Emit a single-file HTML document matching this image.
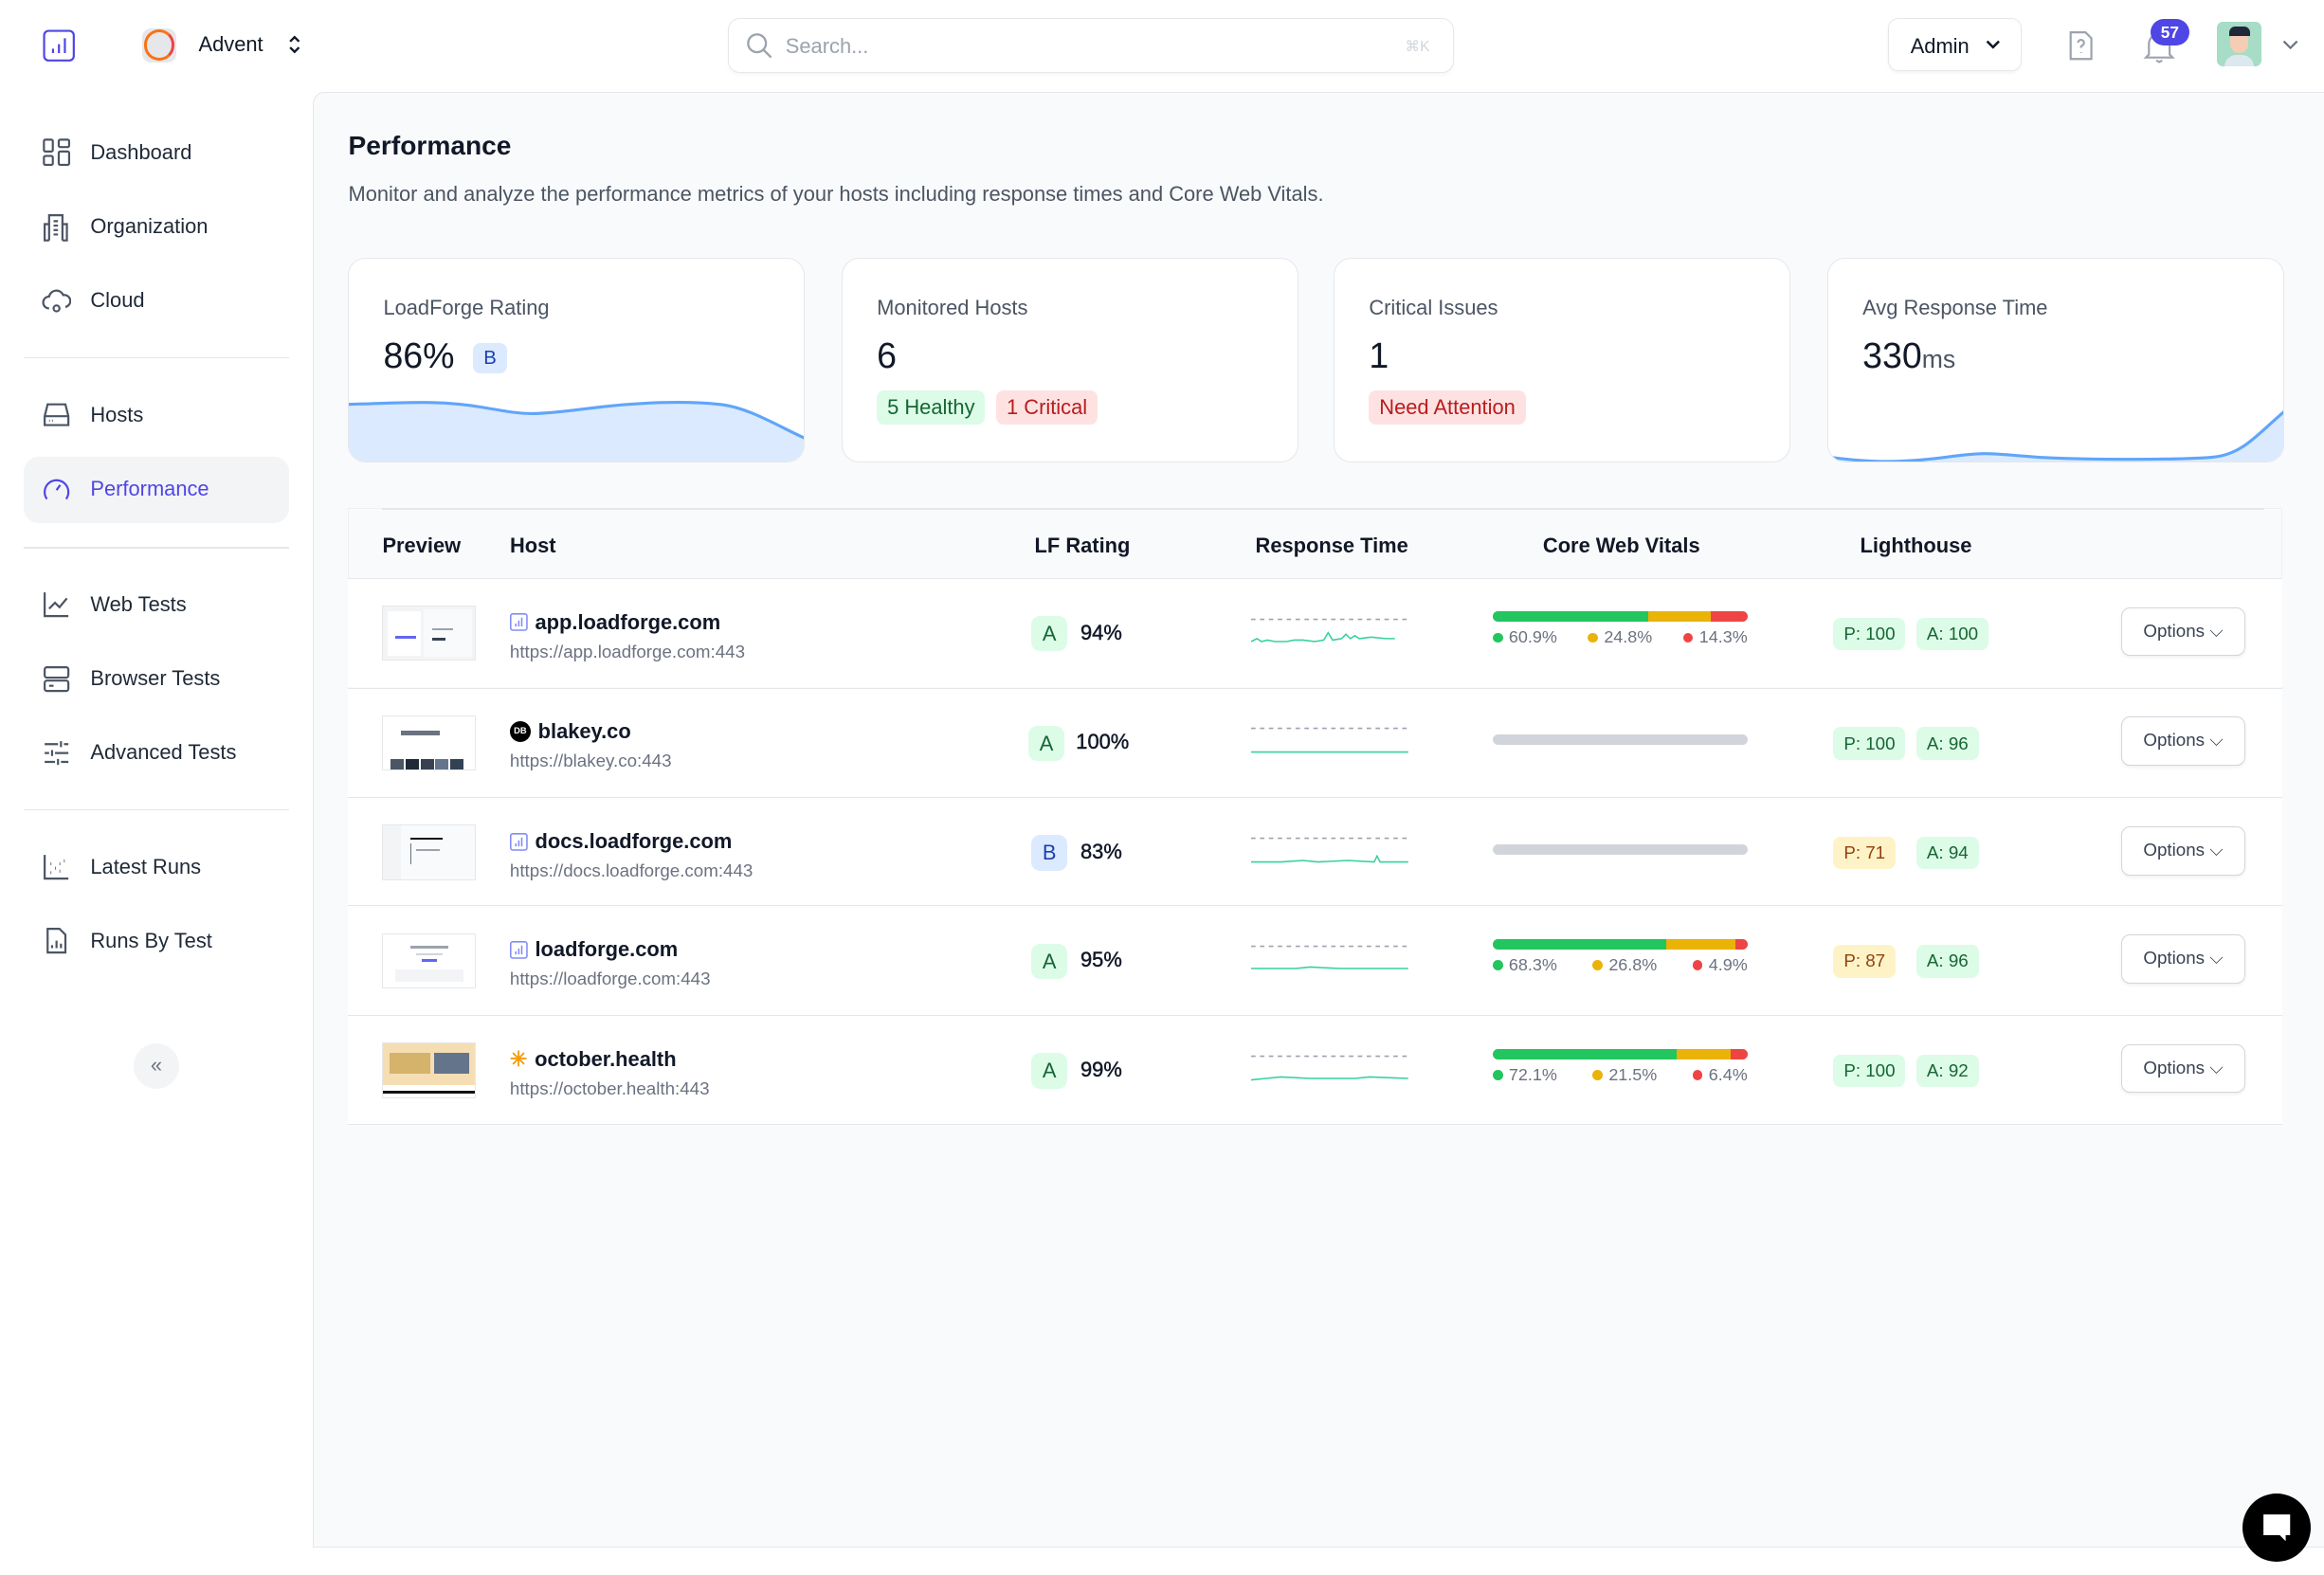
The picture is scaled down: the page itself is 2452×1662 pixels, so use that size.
<!DOCTYPE html>
<html><head><meta charset="utf-8">
<style>
html,body{margin:0;padding:0;background:#fff;overflow:hidden}
body{width:2452px;height:1662px}
#r{position:relative;width:1568px;height:1063px;zoom:1.56378;font-family:"Liberation Sans",sans-serif;color:#111827}
.a{position:absolute}
.nav{position:absolute;left:28px;font-size:14px;color:#1f2937;display:flex;align-items:center;gap:13px}
.nav svg{width:20px;height:20px;fill:none;stroke:#4b5563;stroke-width:1.4}
.sep{position:absolute;left:16px;width:179px;height:1px;background:#e5e7eb}
.card{position:absolute;top:174px;width:308px;height:138px;background:#fff;border:1px solid #e5e7eb;border-radius:12px;overflow:hidden;box-sizing:border-box}
.card .t{position:absolute;left:23px;top:25px;font-size:14px;color:#4b5563}
.card .v{position:absolute;left:23px;top:52px;font-size:24px;color:#111827}
.pill{display:inline-block;border-radius:5px;padding:3px 7px;font-size:14px}
.row{position:absolute;left:235px;width:1305px;height:73px;background:#fff;border-top:1px solid #e5e7eb}
.th{position:absolute;top:360px;font-size:14px;font-weight:bold;color:#111827}
.thumb{position:absolute;left:23px;top:18px;width:62px;height:36px;background:#fff;border:1px solid #e5e7eb;overflow:hidden}
.thumb b{position:absolute;display:block}
.host{position:absolute;left:109px;top:21px;font-size:14px;font-weight:bold;display:flex;align-items:center;gap:5px}
.url{position:absolute;left:109px;top:42px;font-size:12px;color:#6b7280}
.gr{position:absolute;top:25px;width:24px;height:24px;border-radius:6px;text-align:center;line-height:24px;font-size:14px}
.pct{position:absolute;top:28px;font-size:14px;color:#111827;-webkit-text-stroke:.3px #111827}
.spark{position:absolute;left:609px;top:26px}
.cwv{position:absolute;left:772px;top:22px;width:172px}
.bar{height:7px;border-radius:4px;display:flex;overflow:hidden;background:#d1d5db}
.leg{font-size:11.5px;color:#6b7280;margin-top:4px;display:flex;justify-content:space-between}
.leg i{display:inline-block;width:7px;height:7px;border-radius:50%;margin-right:4px;vertical-align:0}
.lh{position:absolute;top:26px;font-size:12px;border-radius:5px;padding:4px 7px;color:#166534;background:#dcfce7}
.opt{position:absolute;left:1196px;top:19px;width:84px;height:33px;border:1px solid #d1d5db;border-radius:6px;box-sizing:border-box;font-size:12px;color:#374151;line-height:31px;text-align:center;box-shadow:0 1px 2px rgba(0,0,0,.06)}
</style></head><body><div id="r">

<svg class="a" style="left:29px;top:20px" width="22" height="22" viewBox="0 0 22 22" fill="none" stroke="#4f46e5" stroke-width="1.4"><rect x="1" y="1" width="20" height="20" rx="3"/><path d="M7 16v-3M11 16v-6M15 16V6"/></svg>
<div class="a" style="left:96px;top:19px;width:23px;height:23px;border-radius:6px;background:#e5e7eb"></div>
<div class="a" style="left:97px;top:20px;width:17px;height:17px;border-radius:50%;border:2px solid #f97316;border-right-color:#ef4444;background:#e5e7eb"></div>
<div class="a" style="left:134px;top:22px;font-size:14px">Advent</div>
<svg class="a" style="left:194px;top:23px" width="10" height="14" viewBox="0 0 10 14" fill="none" stroke="#111827" stroke-width="1.5"><path d="M2 5l3-3 3 3M2 9l3 3 3-3"/></svg>
<div class="a" style="left:491px;top:12px;width:490px;height:37px;border:1px solid #e5e7eb;border-radius:8px;box-sizing:border-box;box-shadow:0 1px 2px rgba(0,0,0,.04)"></div>
<svg class="a" style="left:503px;top:22px" width="18" height="18" viewBox="0 0 18 18" fill="none" stroke="#9ca3af" stroke-width="1.5"><circle cx="7.5" cy="7.5" r="6"/><path d="M12 12l5 5"/></svg>
<div class="a" style="left:530px;top:23px;font-size:14px;color:#9ca3af">Search...</div>
<div class="a" style="left:948px;top:25px;font-size:10px;color:#d1d5db">⌘K</div>
<div class="a" style="left:1274px;top:12px;width:90px;height:36px;border:1px solid #e5e7eb;border-radius:7px;box-sizing:border-box;box-shadow:0 1px 2px rgba(0,0,0,.05)"></div>
<div class="a" style="left:1289px;top:23px;font-size:14px;color:#111827">Admin</div>
<svg class="a" style="left:1340px;top:27px" width="10" height="7" viewBox="0 0 10 7" fill="none" stroke="#111827" stroke-width="1.6"><path d="M1 1l4 4 4-4"/></svg>
<svg class="a" style="left:1394px;top:20px" width="20" height="22" viewBox="0 0 20 22" fill="none" stroke="#9ca3af" stroke-width="1.4"><path d="M3 2h10l4 4v14H3z"/><path d="M8 9a2 2 0 1 1 2.5 2c-.5.3-.5.8-.5 1.5M10 15.5v.5"/></svg>
<svg class="a" style="left:1446px;top:20px" width="22" height="24" viewBox="0 0 22 24" fill="none" stroke="#9ca3af" stroke-width="1.4"><path d="M4 17V10a7 7 0 0 1 14 0v7l2 2H2z"/><path d="M9 21l2 1 2-1"/></svg>
<div class="a" style="left:1451px;top:13px;width:26px;height:18px;border-radius:9px;background:#4f46e5;color:#fff;font-size:11px;font-weight:bold;text-align:center;line-height:18px">57</div>
<div class="a" style="left:1496px;top:15px;width:30px;height:30px;border-radius:4px;background:#a7dcc6;overflow:hidden"><div style="position:absolute;left:9px;top:6px;width:12px;height:15px;border-radius:6px;background:#f5cdb4"></div><div style="position:absolute;left:8px;top:3px;width:14px;height:6px;border-radius:4px 4px 0 0;background:#1f2937"></div><div style="position:absolute;left:5px;top:22px;width:20px;height:10px;border-radius:8px 8px 0 0;background:#dbe9ef"></div></div>
<svg class="a" style="left:1540px;top:27px" width="11" height="7" viewBox="0 0 11 7" fill="none" stroke="#6b7280" stroke-width="1.4"><path d="M1 1l4.5 4.5L10 1"/></svg>

<div class="nav" style="top:93px"><svg viewBox="0 0 20 20"><rect x="1.5" y="1.5" width="6" height="8" rx="1"/><rect x="11.5" y="1.5" width="7" height="5" rx="1"/><rect x="1.5" y="12.5" width="6" height="6" rx="1"/><rect x="11.5" y="9.5" width="7" height="9" rx="1"/></svg>Dashboard</div>
<div class="nav" style="top:143px"><svg viewBox="0 0 20 20"><path d="M5 19V2h9v17M5 8H2v11h3M14 8h3v11h-3M8 6h3M8 9h3M8 12h3M8 15h3"/></svg>Organization</div>
<div class="nav" style="top:193px"><svg viewBox="0 0 20 20"><path d="M5 15a4 4 0 0 1 0-8 5 5 0 0 1 9.5-1A4 4 0 0 1 16 14"/><circle cx="10" cy="15" r="2"/></svg>Cloud</div>
<div class="sep" style="top:241px"></div>
<div class="nav" style="top:270px"><svg viewBox="0 0 20 20"><path d="M2 11l2-8h12l2 8v6H2zM2 11h16M5 14h.5M7 14h.5"/></svg>Hosts</div>
<div class="a" style="left:16px;top:308px;width:179px;height:45px;background:#f3f4f6;border-radius:10px"></div>
<div class="nav" style="top:320px;color:#4f46e5"><svg viewBox="0 0 20 20" style="stroke:#4f46e5"><path d="M3.5 17A8 8 0 1 1 16.5 17M10 11l2.5-3.5"/></svg>Performance</div>
<div class="sep" style="top:369px"></div>
<div class="nav" style="top:398px"><svg viewBox="0 0 20 20"><path d="M2 2v16h16M5 13l4-4 3 3 5-6"/></svg>Web Tests</div>
<div class="nav" style="top:448px"><svg viewBox="0 0 20 20"><rect x="2" y="2" width="16" height="7" rx="1.5"/><rect x="2" y="11" width="16" height="7" rx="1.5"/><path d="M5 14.5h3"/></svg>Browser Tests</div>
<div class="nav" style="top:498px"><svg viewBox="0 0 20 20"><path d="M2 4h9M15 4h3M2 10h3M9 10h9M2 16h7M13 16h5M13 2v4M7 8v4M11 14v4"/></svg>Advanced Tests</div>
<div class="sep" style="top:546px"></div>
<div class="nav" style="top:575px"><svg viewBox="0 0 20 20"><path d="M2 2v16h16" /><path d="M6 14h.5M9 11h.5M12 13h.5M15 6h.5M6 8h.5M12 8h.5" stroke-width="2"/></svg>Latest Runs</div>
<div class="nav" style="top:625px"><svg viewBox="0 0 20 20"><path d="M4 2h8l4 4v12H4zM7 15v-2M10 15v-5M13 15v-3"/></svg>Runs By Test</div>
<div class="a" style="left:90px;top:704px;width:31px;height:31px;border-radius:50%;background:#f3f4f6;text-align:center;line-height:29px;color:#6b7280;font-size:14px">«</div>

<div class="a" style="left:211px;top:62px;width:1360px;height:982px;background:#f9fafb;border:1px solid #e5e7eb;border-radius:8px 0 0 0;box-sizing:border-box"></div>
<div class="a" style="left:235px;top:88px;font-size:18px;font-weight:bold">Performance</div>
<div class="a" style="left:235px;top:123px;font-size:14px;color:#4b5563">Monitor and analyze the performance metrics of your hosts including response times and Core Web Vitals.</div>

<div class="card" style="left:235px"><div class="t">LoadForge Rating</div><div class="v">86% <span class="pill" style="background:#dbeafe;color:#1e40af;font-size:13px;vertical-align:3px;margin-left:6px">B</span></div>
<svg class="a" style="left:0;top:88px" width="308" height="50" viewBox="0 0 308 50"><path d="M0 10C40 9 60 7 90 12S120 18 160 13 230 8 250 10 290 25 308 33V50H0z" fill="#dbeafe"/><path d="M0 10C40 9 60 7 90 12S120 18 160 13 230 8 250 10 290 25 308 33" fill="none" stroke="#60a5fa" stroke-width="2"/></svg></div>
<div class="card" style="left:568px"><div class="t">Monitored Hosts</div><div class="v">6</div><div class="a" style="left:23px;top:89px"><span class="pill" style="background:#dcfce7;color:#166534">5 Healthy</span> <span class="pill" style="background:#fee2e2;color:#b91c1c;margin-left:3px">1 Critical</span></div></div>
<div class="card" style="left:900px"><div class="t">Critical Issues</div><div class="v">1</div><div class="a" style="left:23px;top:89px"><span class="pill" style="background:#fee2e2;color:#b91c1c">Need Attention</span></div></div>
<div class="card" style="left:1233px"><div class="t">Avg Response Time</div><div class="v">330<span style="font-size:17px;color:#4b5563">ms</span></div>
<svg class="a" style="left:0;top:98px" width="308" height="40" viewBox="0 0 308 40"><path d="M0 36C30 40 50 40 80 36S110 34 140 36 240 38 260 36 290 20 308 5V40H0z" fill="#dbeafe"/><path d="M0 36C30 40 50 40 80 36S110 34 140 36 240 38 260 36 290 20 308 5" fill="none" stroke="#60a5fa" stroke-width="2"/></svg></div>

<div class="a" style="left:235px;top:343px;width:1305px;height:416px;border:1px solid #eef0f3;box-sizing:border-box"></div>
<div class="a" style="left:258px;top:343px;width:1270px;height:1px;background:#e5e7eb"></div>
<div class="th" style="left:258px">Preview</div><div class="th" style="left:344px">Host</div><div class="th" style="left:698px">LF Rating</div><div class="th" style="left:847px">Response Time</div><div class="th" style="left:1041px">Core Web Vitals</div><div class="th" style="left:1255px">Lighthouse</div>

<div class="row" style="top:390px"><div class="thumb" style="background:#f3f4f6"><b style="left:3px;top:3px;width:22px;height:30px;background:#fff"></b><b style="left:27px;top:2px;width:33px;height:32px;background:#f8fafc"></b><b style="left:8px;top:20px;width:14px;height:2px;background:#6366f1"></b><b style="left:33px;top:15px;width:14px;height:1px;background:#9ca3af"></b><b style="left:33px;top:21px;width:9px;height:2px;background:#374151"></b></div>
<div class="host"><svg width="12" height="12" viewBox="0 0 12 12" fill="none" stroke="#818cf8"><rect x=".5" y=".5" width="11" height="11" rx="1.5"/><path d="M4 9V7M6 9V5M8 9V3"/></svg>app.loadforge.com</div><div class="url">https://app.loadforge.com:443</div>
<div class="gr" style="left:461px;background:#dcfce7;color:#166534">A</div><div class="pct" style="left:494px">94%</div>
<svg class="spark" width="106" height="20"><path d="M0 1h106" stroke="#9ca3af" stroke-dasharray="3 3"/><path d="M0 16l4-2 3 2 4-1 5 1 8 0 5-1 6 0 8 1 6-1 3-5 3 5 6-1 3-3 3 3 3-2 3 2 8-1 10 1 6 0" fill="none" stroke="#34d399"/></svg>
<div class="cwv"><div class="bar"><i style="width:60.9%;background:#22c55e"></i><i style="width:24.8%;background:#eab308"></i><i style="width:14.3%;background:#ef4444"></i></div><div class="leg"><span><i style="background:#22c55e"></i>60.9%</span><span><i style="background:#eab308"></i>24.8%</span><span><i style="background:#ef4444"></i>14.3%</span></div></div>
<div class="lh" style="left:1002px">P: 100</div><div class="lh" style="left:1058px">A: 100</div><div class="opt">Options ⌵</div></div>

<div class="row" style="top:464px"><div class="thumb"><b style="left:12px;top:10px;width:26px;height:3px;background:#6b7280"></b><b style="left:5px;top:29px;width:9px;height:7px;background:#4b5563"></b><b style="left:15px;top:29px;width:9px;height:7px;background:#1f2937"></b><b style="left:25px;top:29px;width:9px;height:7px;background:#374151"></b><b style="left:35px;top:29px;width:9px;height:7px;background:#64748b"></b><b style="left:45px;top:29px;width:9px;height:7px;background:#334155"></b></div>
<div class="host"><span style="display:inline-block;width:14px;height:14px;border-radius:50%;background:#000;color:#fff;font-size:6px;text-align:center;line-height:14px">DB</span>blakey.co</div><div class="url">https://blakey.co:443</div>
<div class="gr" style="left:459px;background:#dcfce7;color:#166534">A</div><div class="pct" style="left:491px">100%</div>
<svg class="spark" width="106" height="20"><path d="M0 1h106" stroke="#9ca3af" stroke-dasharray="3 3"/><path d="M0 17h106" stroke="#34d399"/></svg>
<div class="cwv"><div class="bar" style="margin-top:9px"></div></div>
<div class="lh" style="left:1002px">P: 100</div><div class="lh" style="left:1058px">A: 96</div><div class="opt">Options ⌵</div></div>

<div class="row" style="top:538px"><div class="thumb" style="background:#f9fafb"><b style="left:0;top:0;width:12px;height:36px;background:#f3f4f6"></b><b style="left:18px;top:8px;width:22px;height:1px;background:#111"></b><b style="left:18px;top:12px;width:1px;height:14px;background:#6b7280"></b><b style="left:22px;top:16px;width:16px;height:1px;background:#9ca3af"></b></div>
<div class="host"><svg width="12" height="12" viewBox="0 0 12 12" fill="none" stroke="#818cf8"><rect x=".5" y=".5" width="11" height="11" rx="1.5"/><path d="M4 9V7M6 9V5M8 9V3"/></svg>docs.loadforge.com</div><div class="url">https://docs.loadforge.com:443</div>
<div class="gr" style="left:461px;background:#dbeafe;color:#1e40af">B</div><div class="pct" style="left:494px">83%</div>
<svg class="spark" width="106" height="20"><path d="M0 1h106" stroke="#9ca3af" stroke-dasharray="3 3"/><path d="M0 17l20 0 15-1 10 1 20-1 18 1 2-4 2 4 19 0" fill="none" stroke="#34d399"/></svg>
<div class="cwv"><div class="bar" style="margin-top:9px"></div></div>
<div class="lh" style="left:1002px;background:#fef3c7;color:#92400e">P: 71</div><div class="lh" style="left:1058px">A: 94</div><div class="opt">Options ⌵</div></div>

<div class="row" style="top:611px"><div class="thumb"><b style="left:18px;top:8px;width:26px;height:2px;background:#9ca3af"></b><b style="left:22px;top:13px;width:18px;height:1px;background:#d1d5db"></b><b style="left:26px;top:17px;width:10px;height:2px;background:#6366f1"></b><b style="left:8px;top:24px;width:46px;height:8px;background:#f3f4f6"></b></div>
<div class="host"><svg width="12" height="12" viewBox="0 0 12 12" fill="none" stroke="#818cf8"><rect x=".5" y=".5" width="11" height="11" rx="1.5"/><path d="M4 9V7M6 9V5M8 9V3"/></svg>loadforge.com</div><div class="url">https://loadforge.com:443</div>
<div class="gr" style="left:461px;background:#dcfce7;color:#166534">A</div><div class="pct" style="left:494px">95%</div>
<svg class="spark" width="106" height="20"><path d="M0 1h106" stroke="#9ca3af" stroke-dasharray="3 3"/><path d="M0 16l30 0 10-1 20 1 46 0" fill="none" stroke="#34d399"/></svg>
<div class="cwv"><div class="bar"><i style="width:68.3%;background:#22c55e"></i><i style="width:26.8%;background:#eab308"></i><i style="width:4.9%;background:#ef4444"></i></div><div class="leg"><span><i style="background:#22c55e"></i>68.3%</span><span><i style="background:#eab308"></i>26.8%</span><span><i style="background:#ef4444"></i>4.9%</span></div></div>
<div class="lh" style="left:1002px;background:#fef3c7;color:#92400e">P: 87</div><div class="lh" style="left:1058px">A: 96</div><div class="opt">Options ⌵</div></div>

<div class="row" style="top:685px;border-bottom:1px solid #e5e7eb"><div class="thumb" style="background:#f5deb3"><b style="left:4px;top:6px;width:28px;height:14px;background:#d6b36a"></b><b style="left:34px;top:6px;width:24px;height:14px;background:#64748b"></b><b style="left:0;top:28px;width:62px;height:8px;background:#fff"></b><b style="left:0;top:32px;width:62px;height:2px;background:#111"></b></div>
<div class="host"><span style="color:#f59e0b;font-size:14px">✳</span>october.health</div><div class="url">https://october.health:443</div>
<div class="gr" style="left:461px;background:#dcfce7;color:#166534">A</div><div class="pct" style="left:494px">99%</div>
<svg class="spark" width="106" height="20"><path d="M0 17l10-1 10-1 20 1 30 0 10-1 26 1" fill="none" stroke="#34d399"/><path d="M0 1h106" stroke="#9ca3af" stroke-dasharray="3 3"/></svg>
<div class="cwv"><div class="bar"><i style="width:72.1%;background:#22c55e"></i><i style="width:21.5%;background:#eab308"></i><i style="width:6.4%;background:#ef4444"></i></div><div class="leg"><span><i style="background:#22c55e"></i>72.1%</span><span><i style="background:#eab308"></i>21.5%</span><span><i style="background:#ef4444"></i>6.4%</span></div></div>
<div class="lh" style="left:1002px">P: 100</div><div class="lh" style="left:1058px">A: 92</div><div class="opt">Options ⌵</div></div>

<div class="a" style="left:1513px;top:1008px;width:46px;height:46px;border-radius:50%;background:#000"></div>
<svg class="a" style="left:1525px;top:1020px" width="22" height="22" viewBox="0 0 22 22"><path d="M2 2h18v14h-3v4l-4-4H2z" fill="#fff"/></svg>
</div></body></html>
